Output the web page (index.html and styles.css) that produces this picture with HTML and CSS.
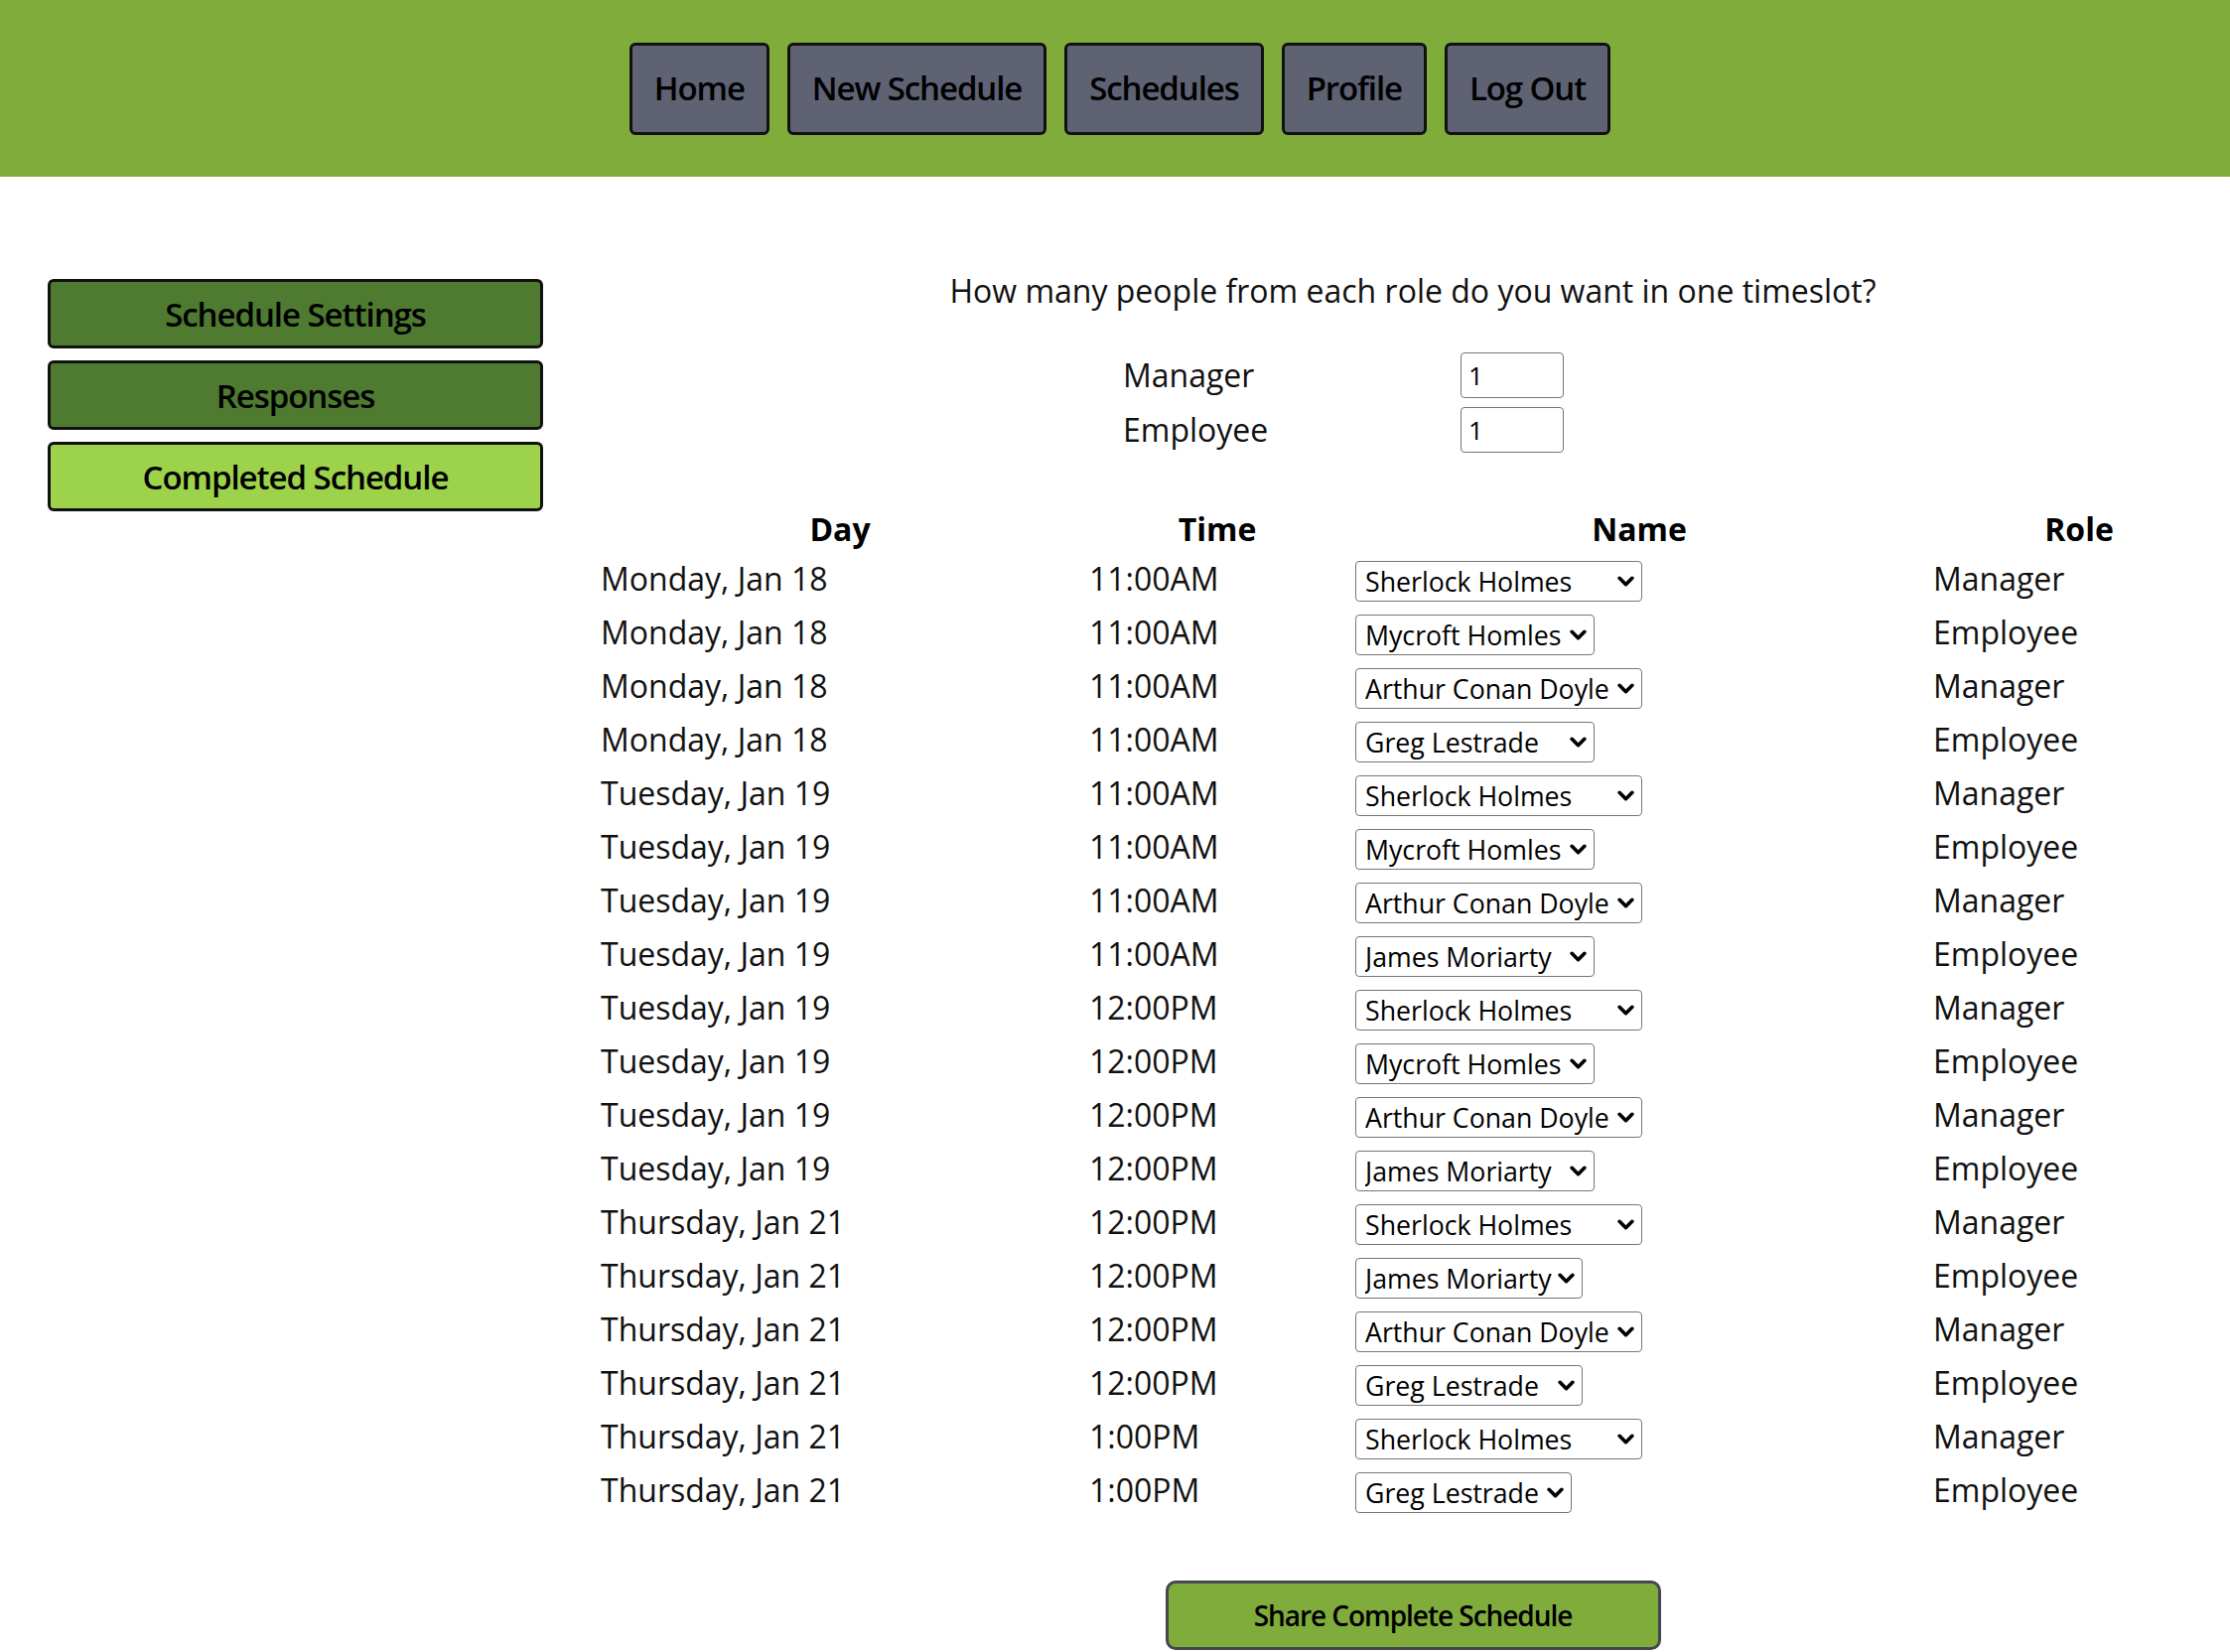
FILE: index.html
```html
<!DOCTYPE html>
<html lang="en">
<head>
<meta charset="utf-8">
<title>Completed Schedule</title>
<link rel="stylesheet" href="styles.css">
</head>
<body>
<header class="topbar">
  <nav class="nav">
    <a class="nav-btn" href="#">Home</a>
    <a class="nav-btn" href="#">New Schedule</a>
    <a class="nav-btn" href="#">Schedules</a>
    <a class="nav-btn" href="#">Profile</a>
    <a class="nav-btn" href="#">Log Out</a>
  </nav>
</header>
<div class="page">
  <aside class="sidebar">
    <button class="side-btn">Schedule Settings</button>
    <button class="side-btn">Responses</button>
    <button class="side-btn side-btn--active">Completed Schedule</button>
  </aside>
  <main class="main">
    <p class="question">How many people from each role do you want in one timeslot?</p>
    <table class="roles">
      <tr><td class="roles-label">Manager</td><td><input class="count" type="text" value="1"></td></tr>
      <tr><td class="roles-label">Employee</td><td><input class="count" type="text" value="1"></td></tr>
    </table>
    <table class="schedule">
      <colgroup><col class="c-day"><col class="c-time"><col class="c-name"><col class="c-role"></colgroup>
      <thead><tr><th>Day</th><th>Time</th><th>Name</th><th>Role</th></tr></thead>
      <tbody>
        <tr><td>Monday, Jan 18</td><td>11:00AM</td><td><span class="pick"><select class="w-lg"><option>Sherlock Holmes</option></select><svg viewBox="0 0 16 10"><path d="M2 2L8 8L14 2"/></svg></span></td><td>Manager</td></tr>
        <tr><td>Monday, Jan 18</td><td>11:00AM</td><td><span class="pick"><select class="w-md"><option>Mycroft Homles</option></select><svg viewBox="0 0 16 10"><path d="M2 2L8 8L14 2"/></svg></span></td><td>Employee</td></tr>
        <tr><td>Monday, Jan 18</td><td>11:00AM</td><td><span class="pick"><select class="w-lg"><option>Arthur Conan Doyle</option></select><svg viewBox="0 0 16 10"><path d="M2 2L8 8L14 2"/></svg></span></td><td>Manager</td></tr>
        <tr><td>Monday, Jan 18</td><td>11:00AM</td><td><span class="pick"><select class="w-md"><option>Greg Lestrade</option></select><svg viewBox="0 0 16 10"><path d="M2 2L8 8L14 2"/></svg></span></td><td>Employee</td></tr>
        <tr><td>Tuesday, Jan 19</td><td>11:00AM</td><td><span class="pick"><select class="w-lg"><option>Sherlock Holmes</option></select><svg viewBox="0 0 16 10"><path d="M2 2L8 8L14 2"/></svg></span></td><td>Manager</td></tr>
        <tr><td>Tuesday, Jan 19</td><td>11:00AM</td><td><span class="pick"><select class="w-md"><option>Mycroft Homles</option></select><svg viewBox="0 0 16 10"><path d="M2 2L8 8L14 2"/></svg></span></td><td>Employee</td></tr>
        <tr><td>Tuesday, Jan 19</td><td>11:00AM</td><td><span class="pick"><select class="w-lg"><option>Arthur Conan Doyle</option></select><svg viewBox="0 0 16 10"><path d="M2 2L8 8L14 2"/></svg></span></td><td>Manager</td></tr>
        <tr><td>Tuesday, Jan 19</td><td>11:00AM</td><td><span class="pick"><select class="w-md"><option>James Moriarty</option></select><svg viewBox="0 0 16 10"><path d="M2 2L8 8L14 2"/></svg></span></td><td>Employee</td></tr>
        <tr><td>Tuesday, Jan 19</td><td>12:00PM</td><td><span class="pick"><select class="w-lg"><option>Sherlock Holmes</option></select><svg viewBox="0 0 16 10"><path d="M2 2L8 8L14 2"/></svg></span></td><td>Manager</td></tr>
        <tr><td>Tuesday, Jan 19</td><td>12:00PM</td><td><span class="pick"><select class="w-md"><option>Mycroft Homles</option></select><svg viewBox="0 0 16 10"><path d="M2 2L8 8L14 2"/></svg></span></td><td>Employee</td></tr>
        <tr><td>Tuesday, Jan 19</td><td>12:00PM</td><td><span class="pick"><select class="w-lg"><option>Arthur Conan Doyle</option></select><svg viewBox="0 0 16 10"><path d="M2 2L8 8L14 2"/></svg></span></td><td>Manager</td></tr>
        <tr><td>Tuesday, Jan 19</td><td>12:00PM</td><td><span class="pick"><select class="w-md"><option>James Moriarty</option></select><svg viewBox="0 0 16 10"><path d="M2 2L8 8L14 2"/></svg></span></td><td>Employee</td></tr>
        <tr><td>Thursday, Jan 21</td><td>12:00PM</td><td><span class="pick"><select class="w-lg"><option>Sherlock Holmes</option></select><svg viewBox="0 0 16 10"><path d="M2 2L8 8L14 2"/></svg></span></td><td>Manager</td></tr>
        <tr><td>Thursday, Jan 21</td><td>12:00PM</td><td><span class="pick"><select class="w-sm"><option>James Moriarty</option></select><svg viewBox="0 0 16 10"><path d="M2 2L8 8L14 2"/></svg></span></td><td>Employee</td></tr>
        <tr><td>Thursday, Jan 21</td><td>12:00PM</td><td><span class="pick"><select class="w-lg"><option>Arthur Conan Doyle</option></select><svg viewBox="0 0 16 10"><path d="M2 2L8 8L14 2"/></svg></span></td><td>Manager</td></tr>
        <tr><td>Thursday, Jan 21</td><td>12:00PM</td><td><span class="pick"><select class="w-sm"><option>Greg Lestrade</option></select><svg viewBox="0 0 16 10"><path d="M2 2L8 8L14 2"/></svg></span></td><td>Employee</td></tr>
        <tr><td>Thursday, Jan 21</td><td>1:00PM</td><td><span class="pick"><select class="w-lg"><option>Sherlock Holmes</option></select><svg viewBox="0 0 16 10"><path d="M2 2L8 8L14 2"/></svg></span></td><td>Manager</td></tr>
        <tr><td>Thursday, Jan 21</td><td>1:00PM</td><td><span class="pick"><select class="w-xs"><option>Greg Lestrade</option></select><svg viewBox="0 0 16 10"><path d="M2 2L8 8L14 2"/></svg></span></td><td>Employee</td></tr>
      </tbody>
    </table>
    <div class="share-row"><button class="share-btn">Share Complete Schedule</button></div>
  </main>
</div>
</body>
</html>
```
FILE: styles.css
```css
* { box-sizing: border-box; }
html, body { margin: 0; padding: 0; }
body {
  font-family: "Open Sans", "Liberation Sans", sans-serif;
  color: #111;
  background: #fff;
  width: 2246px;
  height: 1664px;
  overflow: hidden;
}

.topbar {
  background: #80ac3c;
  height: 178px;
  display: flex;
  align-items: center;
  justify-content: center;
}
.nav {
  display: flex;
  gap: 18px;
  margin-left: 10px;
}
.nav-btn {
  display: block;
  height: 93px;
  padding: 0 22px;
  background: #5e6273;
  border: 3.5px solid #111;
  border-radius: 6px;
  color: #000;
  text-decoration: none;
  font-size: 33px;
  font-weight: 600;
  line-height: 86px;
  letter-spacing: -1.1px;
}

.page {
  display: grid;
  grid-template-columns: 600px 1646px;
}
.sidebar {
  padding: 103px 0 0 48px;
  display: flex;
  flex-direction: column;
  gap: 12px;
}
.side-btn {
  width: 499px;
  height: 70px;
  background: #4e7b2f;
  border: 3.5px solid #111;
  border-radius: 6px;
  font-family: inherit;
  font-size: 33px;
  font-weight: 600;
  color: #000;
  padding: 0;
  letter-spacing: -1.05px;
}
.side-btn--active { background: #9dd34a; }

.main { padding-top: 93px; }
.question {
  margin: 0;
  text-align: center;
  font-size: 32px;
  line-height: 44px;
}
.roles {
  border-collapse: collapse;
  margin: 35px 0 0 531px;
}
.roles td { padding: 0; height: 55px; vertical-align: middle; font-size: 32px; }
.roles-label { width: 340px; }
.count {
  width: 104px;
  height: 46px;
  border: 1.5px solid #767676;
  border-radius: 4px;
  font-family: inherit;
  font-size: 26px;
  padding: 0 0 0 7px;
  color: #000;
}

.schedule {
  width: 1646px;
  border-collapse: collapse;
  margin-top: 50px;
  table-layout: fixed;
  font-size: 32px;
}
.c-day { width: 492px; }
.c-time { width: 268px; }
.c-name { width: 582px; }
.c-role { width: 304px; }
.schedule th {
  font-weight: 700;
  height: 46px;
  padding: 0;
  line-height: 44px;
  text-align: center;
  color: #000;
}
.schedule td {
  height: 54px;
  padding: 0 0 0 5px;
  line-height: 44px;
  vertical-align: middle;
  white-space: nowrap;
}

.pick {
  position: relative;
  display: inline-block;
  vertical-align: middle;
  line-height: 0;
}
.pick select {
  appearance: none;
  -webkit-appearance: none;
  height: 41px;
  border: 1.5px solid #767676;
  border-radius: 4px;
  background: #fff;
  font-family: inherit;
  font-size: 26.7px;
  color: #000;
  padding: 0 30px 0 9px;
  margin: 0;
}
.pick svg {
  position: absolute;
  right: 8px;
  top: 15px;
  width: 17px;
  height: 11px;
  pointer-events: none;
}
.pick path {
  fill: none;
  stroke: #000;
  stroke-width: 3.4;
  stroke-linecap: round;
  stroke-linejoin: round;
}
.w-lg { width: 289px; }
.w-md { width: 241px; }
.w-sm { width: 229px; }
.w-xs { width: 218px; }

.share-row {
  display: flex;
  justify-content: center;
  margin-top: 64px;
}
.share-btn {
  width: 499px;
  height: 70px;
  background: #80ac3c;
  border: 3.5px solid #45474f;
  border-radius: 10px;
  font-family: inherit;
  font-size: 28px;
  font-weight: 600;
  color: #000;
  padding: 0;
  letter-spacing: -1.05px;
}
```
